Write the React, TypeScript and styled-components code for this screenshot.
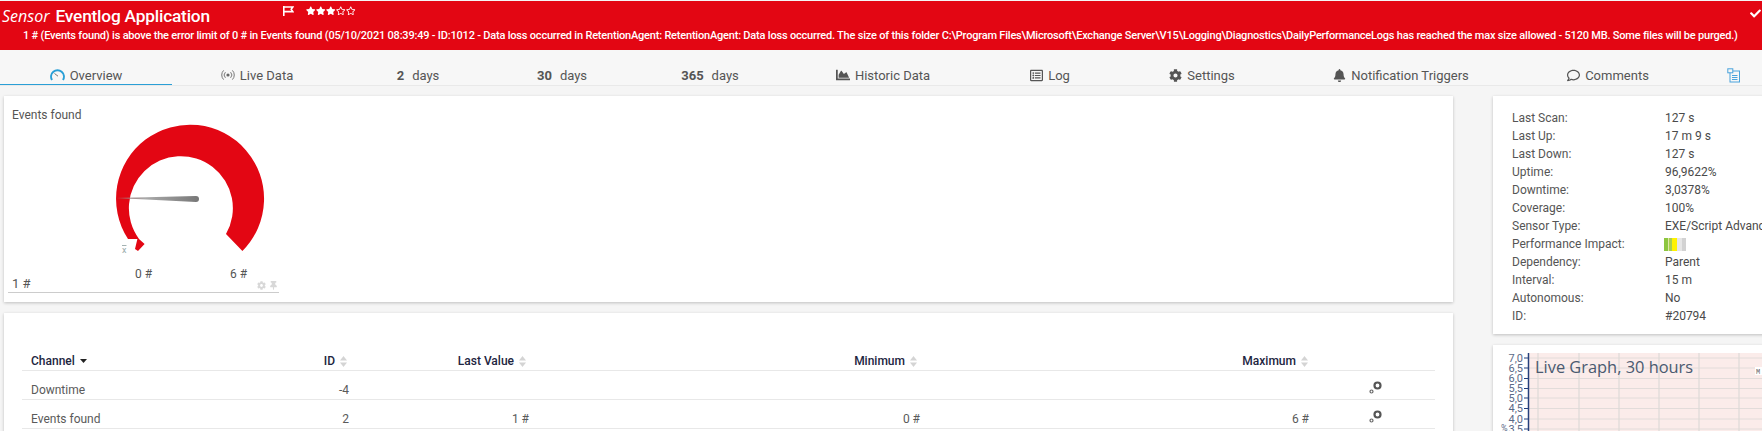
import { ReactNode } from "react";
import { createGlobalStyle, styled } from "styled-components";
import { FaBell, FaChartArea, FaCheck, FaCog, FaRegComment, FaRegListAlt, FaRegStar, FaStar, FaThumbtack } from "react-icons/fa";

const GlobalStyles = createGlobalStyle`
  html, body {
    margin: 0;
    padding: 0;
    background: #f5f5f5;
    font-family: Roboto, "Liberation Sans", sans-serif;
    overflow: hidden;
  }
`;

const Page = styled.div`
  width: 1762px;
  height: 431px;
  overflow: hidden;
  padding-top: 1px;
  box-sizing: border-box;
  background: #f5f5f5;
`;

const Header = styled.header`
  height: 49px;
  background: #e30613;
  color: #fff;
  box-sizing: border-box;
  padding: 5px 0 0 2px;
`;

const HeaderTop = styled.div`
  display: flex;
  align-items: flex-start;
  height: 20px;
`;

const Title = styled.h1`
  margin: 0;
  width: 208px;
  font-size: 17.3px;
  line-height: 20px;
  font-weight: 500;
  white-space: nowrap;
  letter-spacing: -0.2px;
`;

const TitleKind = styled.i`
  font-family: "Open Sans", sans-serif;
  font-weight: 400;
  font-size: 16px;
  letter-spacing: 0;
  margin-right: 6px;
`;

const FlagMark = styled.span`
  display: flex;
  margin-left: 73px;
  width: 23px;
`;

const Stars = styled.span`
  display: flex;
  gap: 0.5px;
  font-size: 9.5px;
`;

const HeaderCheck = styled.span`
  display: flex;
  margin-left: auto;
  margin-right: 1px;
  margin-top: 2px;
  font-size: 11px;
`;

const Message = styled.div`
  margin: 2px 0 0 21px;
  font-size: 11px;
  line-height: 16px;
  font-weight: 500;
  letter-spacing: -0.2px;
  white-space: nowrap;
`;

const Tabs = styled.nav`
  display: flex;
  height: 36px;
  box-sizing: border-box;
  background: #f7f7f7;
  border-bottom: 1px solid #e9e9e9;
  overflow: hidden;
`;

const Tab = styled.div<{ $width: number; $active?: boolean }>`
  flex: 0 0 ${(p) => p.$width}px;
  display: flex;
  align-items: center;
  justify-content: center;
  gap: 5px;
  height: 36px;
  box-sizing: border-box;
  padding-top: 18px;
  font-size: 13px;
  line-height: 18px;
  color: #555;
  white-space: nowrap;
  border-bottom: 2px solid ${(p) => (p.$active ? "#2a9fd6" : "transparent")};
  svg {
    flex: none;
    color: #555;
    position: relative;
    top: -1px;
  }
`;

const DayCount = styled.b`
  font-weight: 700;
  margin-right: 3px;
`;

const Content = styled.main`
  display: flex;
  gap: 40px;
  padding: 10px 0 0 4px;
`;

const LeftColumn = styled.div`
  flex: 0 0 1449px;
  display: flex;
  flex-direction: column;
  gap: 11px;
`;

const RightColumn = styled.div`
  flex: 0 0 300px;
  display: flex;
  flex-direction: column;
  gap: 11px;
`;

const Card = styled.section<{ $height: number }>`
  height: ${(p) => p.$height}px;
  background: #fff;
  box-sizing: border-box;
  box-shadow: 0 1px 3px rgba(0, 0, 0, 0.22);
`;

const CardTitle = styled.div`
  padding: 12px 0 0 8px;
  font-size: 12px;
  line-height: 14px;
  color: #555;
`;

const GaugeBody = styled.div`
  position: relative;
  display: flex;
  align-items: flex-end;
  width: 271px;
  height: 171px;
  margin-left: 4px;
  box-sizing: border-box;
  border-bottom: 1px solid #ccc;
  padding-left: 4px;
`;

const GaugeValue = styled.div`
  flex: 0 0 88px;
  font-size: 13px;
  line-height: 17px;
  color: #555;
`;

const GaugeTools = styled.div`
  position: absolute;
  right: 1px;
  bottom: 2px;
  display: flex;
  gap: 3px;
  color: #d8d8d8;
  font-size: 9px;
`;

const TableWrap = styled.div`
  padding: 39px 0 0 18px;
  width: 1413px;
`;

const Row = styled.div<{ $head?: boolean }>`
  display: grid;
  grid-template-columns: 278px 49px 180px 391px 389px 1fr;
  align-items: center;
  height: ${(p) => (p.$head ? 19 : 29)}px;
  padding-top: ${(p) => (p.$head ? 0 : 9)}px;
  box-sizing: border-box;
  border-bottom: 1px solid #e8e8e8;
  font-size: 12px;
  font-weight: ${(p) => (p.$head ? 500 : 400)};
  color: ${(p) => (p.$head ? "#1d2540" : "#5a5a5a")};
`;

const NameCell = styled.div`
  padding-left: 9px;
  display: flex;
  align-items: center;
  gap: 5px;
`;

const NumCell = styled.div<{ $inset?: number }>`
  display: flex;
  align-items: center;
  justify-content: flex-end;
  gap: 5px;
  white-space: nowrap;
  padding-right: ${(p) => p.$inset ?? 0}px;
`;

const ToolCell = styled.div`
  padding: 0 0 5px 60px;
  display: flex;
`;

const Facts = styled.dl`
  margin: 0;
  padding: 13px 0 0 19px;
  font-size: 12px;
  color: #555;
`;

const Fact = styled.div`
  display: flex;
  height: 18px;
  align-items: center;
`;

const FactLabel = styled.dt`
  flex: 0 0 153px;
  white-space: nowrap;
`;

const FactValue = styled.dd`
  margin: 0;
  white-space: nowrap;
  color: #4a4a4a;
`;

const ImpactBar = styled.div`
  display: flex;
  height: 13px;
  margin-left: -1px;
`;

const ImpactCell = styled.span<{ $color: string; $width: number }>`
  width: ${(p) => p.$width}px;
  background: ${(p) => p.$color};
`;

const GraphBox = styled.svg`
  display: block;
`;

const GaugeIcon = () => (
  <svg width="15" height="14" viewBox="0 0 15 14" fill="none">
    <path d="M2 12A6.4 6.4 0 1 1 13 12" stroke="#2a9fd6" strokeWidth="2" />
    <path d="M4.5 5.5L8 8.2" stroke="#777" strokeWidth="1" />
  </svg>
);

const LiveIcon = () => (
  <svg width="14" height="14" viewBox="0 0 14 14" fill="none" stroke="#777" strokeWidth="1">
    <circle cx="7" cy="7" r="1.6" fill="#666" stroke="none" />
    <path d="M4.4 4.2a4 4 0 0 0 0 5.6M9.6 4.2a4 4 0 0 1 0 5.6" />
    <path d="M2.6 2.4a6.6 6.6 0 0 0 0 9.2M11.4 2.4a6.6 6.6 0 0 1 0 9.2" />
  </svg>
);

const NotesIcon = () => (
  <svg width="14" height="15" viewBox="0 0 14 15" fill="none" stroke="#4aa3dc" strokeWidth="1">
    <rect x="3" y="3" width="9.5" height="11" />
    <rect x="0.8" y="0.8" width="5" height="4" fill="#f7f7f7" />
    <path d="M5 7.5h5.5M5 9.5h5.5M5 11.5h5.5" />
  </svg>
);

const FlagIcon = () => (
  <svg width="11" height="10" viewBox="0 0 11 10" fill="none" stroke="#fff" strokeWidth="1.6">
    <path d="M0.8 0v10" />
    <path d="M0.8 1h9l-1.6 2.2L9.8 5.6H0.8" />
  </svg>
);

const SortIcon = () => (
  <svg width="7" height="11" viewBox="0 0 7 11" fill="#d4d4d4">
    <path d="M3.5 0L7 4.5H0z" />
    <path d="M3.5 11L0 6.5h7z" />
  </svg>
);

const CaretIcon = () => (
  <svg width="7" height="4" viewBox="0 0 7 4" fill="#222">
    <path d="M0 0h7L3.5 4z" />
  </svg>
);

const ChannelToolIcon = () => (
  <svg width="13" height="13" viewBox="0 0 13 13" fill="none">
    <circle cx="8.5" cy="4.5" r="3" stroke="#555" strokeWidth="2.2" />
    <circle cx="2.5" cy="10.5" r="1.5" stroke="#666" strokeWidth="1.2" />
  </svg>
);

const Gauge = () => (
  <svg width="179" height="170" viewBox="100 122 179 170">
    <defs>
      <linearGradient id="needle" x1="0" x2="1" y1="0" y2="0">
        <stop offset="0" stopColor="#9a6a6a" />
        <stop offset="0.35" stopColor="#aaa" />
        <stop offset="1" stopColor="#777" />
      </linearGradient>
    </defs>
    <path
      d="M128 239A74 74 0 1 1 242.4 251L226 234A52 52 0 1 0 139 239L144.6 244L138 251L135 249L137.4 239Z"
      fill="#e30613"
    />
    <path d="M116 198L196 196Q199 196 199 199Q199 202 196 202Z" fill="url(#needle)" />
    <g fontFamily="Roboto, sans-serif" fontSize="12" fill="#555">
      <text x="135" y="278">0 #</text>
      <text x="230" y="278">6 #</text>
      <text x="122" y="253" fontSize="9" fill="#9aa" textDecoration="overline">x</text>
    </g>
  </svg>
);

const gridY = [358, 368, 378.5, 388.5, 398, 408.5, 419, 429];
const gridLabels = ["7,0", "6,5", "6,0", "5,5", "5,0", "4,5", "4,0", "3,5"];
const gridX = [1538, 1579, 1619, 1659, 1699, 1739];

const LiveGraph = () => (
  <GraphBox width="269" height="86" viewBox="1493 345 269 86">
    <rect x="1528" y="353" width="234" height="78" fill="#fbecea" />
    {gridY.map((y) => (
      <line key={y} x1="1528" x2="1762" y1={y} y2={y} stroke="#e2dcda" />
    ))}
    {gridX.map((x) => (
      <line key={x} x1={x} x2={x} y1="353" y2="431" stroke="#dedad7" strokeWidth="1.2" />
    ))}
    <line x1="1528.5" x2="1528.5" y1="353" y2="431" stroke="#24407c" strokeWidth="1.5" />
    {gridY.map((y, i) => (
      <g key={y}>
        <line x1="1524" x2="1528" y1={y} y2={y} stroke="#24407c" />
        <text x="1523" y={y + 3.5} textAnchor="end" fontFamily="Roboto, sans-serif" fontSize="11" fill="#5b6a88">
          {gridLabels[i]}
        </text>
      </g>
    ))}
    <text x="1501" y="431" fontFamily="Roboto, sans-serif" fontSize="9" fill="#5b6a88">%</text>
    <text x="1535" y="373" fontFamily="'Open Sans', sans-serif" fontSize="16.4" fill="#4a5a70">Live Graph, 30 hours</text>
    <rect x="1755" y="367" width="7" height="8" fill="#fff" />
    <text x="1756" y="374" fontFamily="'Liberation Mono', monospace" fontSize="7" fill="#666">M</text>
  </GraphBox>
);

const tabs: { label: ReactNode; width: number; active?: boolean }[] = [
  { label: <><GaugeIcon />Overview</>, width: 172, active: true },
  { label: <><LiveIcon />Live Data</>, width: 170 },
  { label: <><DayCount>2</DayCount> days</>, width: 152 },
  { label: <><DayCount>30</DayCount>days</>, width: 136 },
  { label: <><DayCount>365</DayCount>days</>, width: 160 },
  { label: <><FaChartArea size={14} />Historic Data</>, width: 186 },
  { label: <><FaRegListAlt size={13} />Log</>, width: 148 },
  { label: <><FaCog size={13} />Settings</>, width: 156 },
  { label: <><FaBell size={13} />Notification Triggers</>, width: 242 },
  { label: <><FaRegComment size={13} />Comments</>, width: 172 },
  { label: <NotesIcon />, width: 80 },
];

const impact = [
  { color: "#8dc63f", width: 3.5 },
  { color: "#dfe8a8", width: 1.5 },
  { color: "#a8cf4f", width: 2.5 },
  { color: "#fff200", width: 5 },
  { color: "#e6e6e6", width: 5 },
  { color: "#d2d2d2", width: 4 },
];

const facts: [string, ReactNode][] = [
  ["Last Scan:", "127 s"],
  ["Last Up:", "17 m 9 s"],
  ["Last Down:", "127 s"],
  ["Uptime:", "96,9622%"],
  ["Downtime:", "3,0378%"],
  ["Coverage:", "100%"],
  ["Sensor Type:", "EXE/Script Advanced"],
  [
    "Performance Impact:",
    <ImpactBar>
      {impact.map((c, i) => (
        <ImpactCell key={i} $color={c.color} $width={c.width} />
      ))}
    </ImpactBar>,
  ],
  ["Dependency:", "Parent"],
  ["Interval:", "15 m"],
  ["Autonomous:", "No"],
  ["ID:", "#20794"],
];

export default function App() {
  return (
    <Page>
      <GlobalStyles />
      <Header>
        <HeaderTop>
          <Title>
            <TitleKind>Sensor</TitleKind>Eventlog Application
          </Title>
          <FlagMark>
            <FlagIcon />
          </FlagMark>
          <Stars>
            <FaStar />
            <FaStar />
            <FaStar />
            <FaRegStar />
            <FaRegStar />
          </Stars>
          <HeaderCheck>
            <FaCheck />
          </HeaderCheck>
        </HeaderTop>
        <Message>
          1 # (Events found) is above the error limit of 0 # in Events found (05/10/2021 08:39:49 - ID:1012 - Data loss occurred in RetentionAgent: RetentionAgent: Data loss occurred. The size of this folder C:\Program Files\Microsoft\Exchange Server\V15\Logging\Diagnostics\DailyPerformanceLogs has reached the max size allowed - 5120 MB. Some files will be purged.)
        </Message>
      </Header>
      <Tabs>
        {tabs.map((t, i) => (
          <Tab key={i} $width={t.width} $active={t.active}>
            {t.label}
          </Tab>
        ))}
      </Tabs>
      <Content>
        <LeftColumn>
          <Card $height={206}>
            <CardTitle>Events found</CardTitle>
            <GaugeBody>
              <GaugeValue>1 #</GaugeValue>
              <Gauge />
              <GaugeTools>
                <FaCog />
                <FaThumbtack />
              </GaugeTools>
            </GaugeBody>
          </Card>
          <Card $height={200}>
            <TableWrap>
              <Row $head>
                <NameCell>
                  Channel <CaretIcon />
                </NameCell>
                <NumCell $inset={2}>
                  ID <SortIcon />
                </NumCell>
                <NumCell $inset={3}>
                  Last Value <SortIcon />
                </NumCell>
                <NumCell $inset={3}>
                  Minimum <SortIcon />
                </NumCell>
                <NumCell $inset={1}>
                  Maximum <SortIcon />
                </NumCell>
              </Row>
              <Row>
                <NameCell>Downtime</NameCell>
                <NumCell>-4</NumCell>
                <NumCell />
                <NumCell />
                <NumCell />
                <ToolCell>
                  <ChannelToolIcon />
                </ToolCell>
              </Row>
              <Row>
                <NameCell>Events found</NameCell>
                <NumCell>2</NumCell>
                <NumCell>1 #</NumCell>
                <NumCell>0 #</NumCell>
                <NumCell>6 #</NumCell>
                <ToolCell>
                  <ChannelToolIcon />
                </ToolCell>
              </Row>
            </TableWrap>
          </Card>
        </LeftColumn>
        <RightColumn>
          <Card $height={238}>
            <Facts>
              {facts.map(([label, value]) => (
                <Fact key={label}>
                  <FactLabel>{label}</FactLabel>
                  <FactValue>{value}</FactValue>
                </Fact>
              ))}
            </Facts>
          </Card>
          <Card $height={120}>
            <LiveGraph />
          </Card>
        </RightColumn>
      </Content>
    </Page>
  );
}
